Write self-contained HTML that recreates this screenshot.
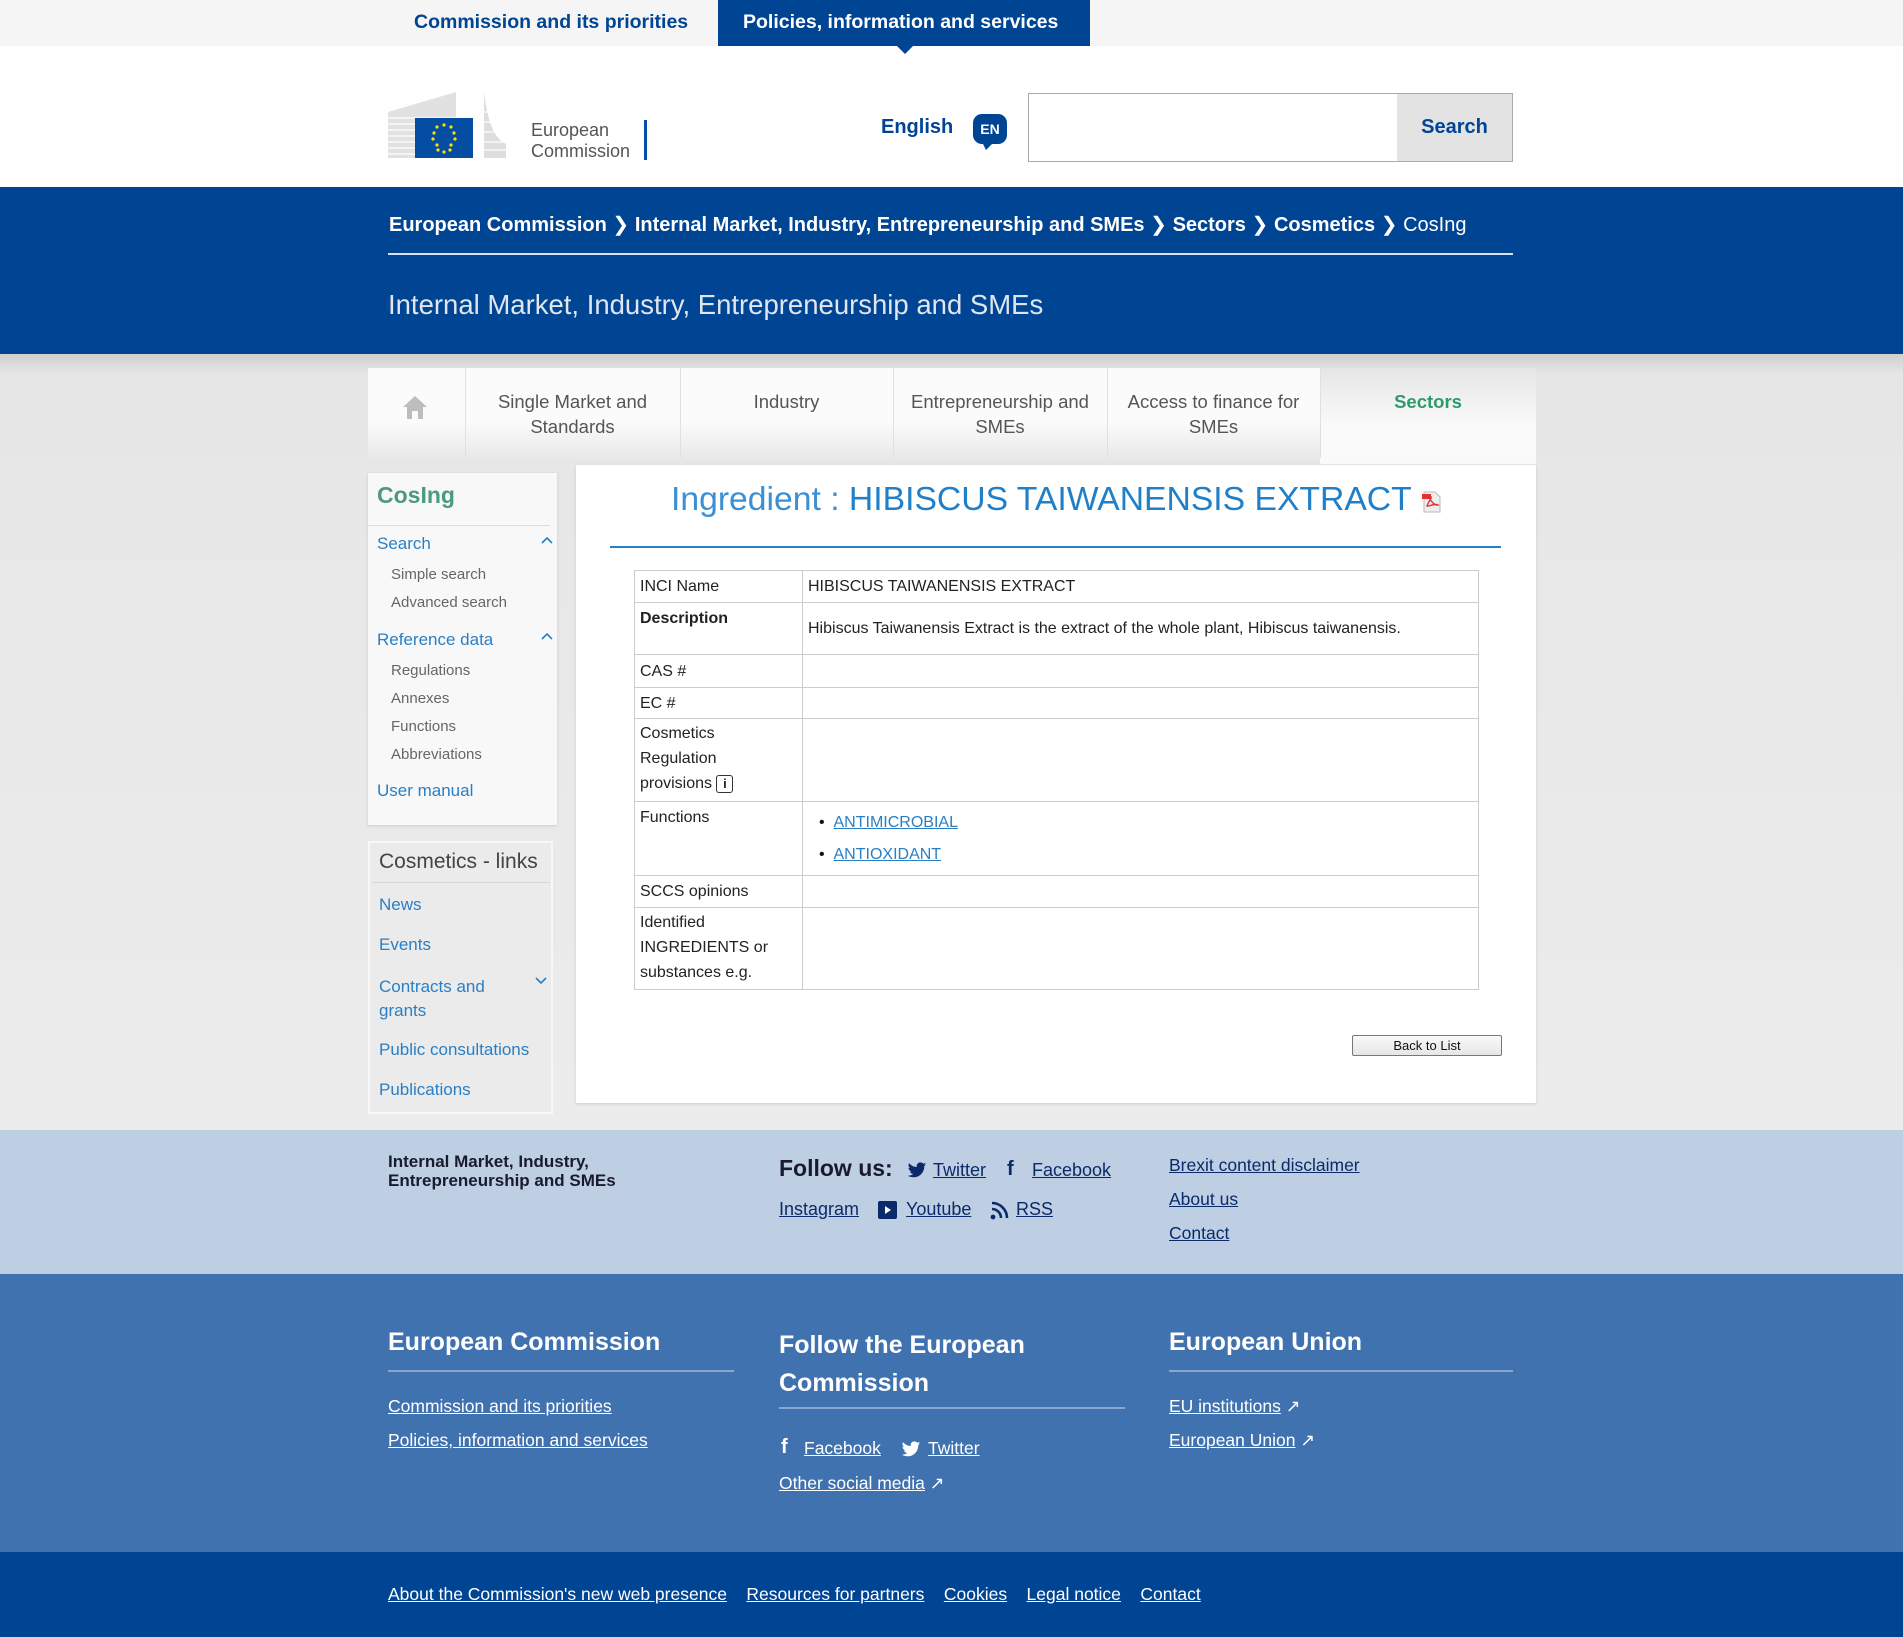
<!DOCTYPE html>
<html><head><meta charset="utf-8"><style>
*{margin:0;padding:0;box-sizing:border-box}
body{width:1903px;height:1637px;font-family:"Liberation Sans",Arial,sans-serif;background:#fff;position:relative;overflow:hidden}
.a{position:absolute;white-space:nowrap}
a{color:inherit}
.sep{display:inline-block;width:28px;text-align:center;font-weight:normal}
</style></head><body>
<!-- top bar -->
<div class="a" style="left:0;top:0;width:1903px;height:46px;background:#f5f5f5"></div>
<div class="a" style="left:414px;top:11px;font-size:19.5px;font-weight:bold;color:#004494">Commission and its priorities</div>
<div class="a" style="left:718px;top:0;width:372px;height:46px;background:#004494"></div>
<div class="a" style="left:743px;top:11px;font-size:19.5px;font-weight:bold;color:#fff">Policies, information and services</div>
<div class="a" style="left:897px;top:46px;width:0;height:0;border-left:8px solid transparent;border-right:8px solid transparent;border-top:8px solid #004494"></div>
<!-- logo -->
<svg class="a" style="left:388px;top:92px" width="120" height="68" viewBox="0 0 120 68">
<g fill="#c8c8c8"><path d="M0 20 L68 0 L68 66 L0 66Z" opacity=".55"/><path d="M96 0 C100 30 105 45 118 52 L118 66 L96 66Z" opacity=".6"/></g>
<g stroke="#fff" stroke-width="1.2">
<line x1="0" y1="26" x2="70" y2="26"/><line x1="0" y1="32" x2="70" y2="32"/><line x1="0" y1="38" x2="70" y2="38"/><line x1="0" y1="44" x2="70" y2="44"/><line x1="0" y1="50" x2="70" y2="50"/><line x1="0" y1="56" x2="70" y2="56"/><line x1="0" y1="62" x2="70" y2="62"/>
<line x1="96" y1="20" x2="120" y2="20"/><line x1="96" y1="30" x2="120" y2="30"/><line x1="96" y1="40" x2="120" y2="40"/><line x1="96" y1="50" x2="120" y2="50"/><line x1="96" y1="58" x2="120" y2="58"/></g>
<rect x="27" y="26" width="58" height="40" fill="#034ea2"/>
<g fill="#ffde00"><circle cx="56" cy="33" r="1.6"/><circle cx="63" cy="35" r="1.6"/><circle cx="66" cy="41" r="1.6"/><circle cx="63" cy="53" r="1.6"/><circle cx="67" cy="47" r="1.6"/><circle cx="56" cy="60" r="1.6"/><circle cx="49" cy="35" r="1.6"/><circle cx="46" cy="41" r="1.6"/><circle cx="45" cy="47" r="1.6"/><circle cx="49" cy="53" r="1.6"/><circle cx="62" cy="58" r="1.6"/><circle cx="50" cy="58" r="1.6"/></g>
</svg>
<div class="a" style="left:531px;top:120px;font-size:18px;color:#555;line-height:21px">European<br>Commission</div>
<div class="a" style="left:644px;top:120px;width:3px;height:40px;background:#034ea2"></div>
<div class="a" style="left:881px;top:116px;font-size:20px;font-weight:bold;color:#004494">English</div>
<div class="a" style="left:973px;top:114px;width:34px;height:30px;border-radius:9px;background:#004494;color:#fff;font-size:14px;font-weight:bold;text-align:center;line-height:30px">EN</div>
<div class="a" style="left:982px;top:142px;width:0;height:0;border-left:4px solid transparent;border-right:8px solid transparent;border-top:8px solid #004494"></div>
<div class="a" style="left:1028px;top:93px;width:485px;height:69px;border:1px solid #aaa;background:#fff"></div>
<div class="a" style="left:1397px;top:94px;width:115px;height:67px;background:#e3e3e3;color:#004494;font-size:20px;font-weight:bold;text-align:center;line-height:67px">Search</div>
<!-- blue band -->
<div class="a" style="left:0;top:187px;width:1903px;height:167px;background:#004494"></div>
<div class="a" style="left:389px;top:212px;font-size:20px;color:#fff"><b>European Commission</b><span class="sep">&#x276F;</span><b>Internal Market, Industry, Entrepreneurship and SMEs</b><span class="sep">&#x276F;</span><b>Sectors</b><span class="sep">&#x276F;</span><b>Cosmetics</b><span class="sep">&#x276F;</span>CosIng</div>
<div class="a" style="left:388px;top:253px;width:1125px;height:2px;background:#d6e0ee"></div>
<div class="a" style="left:388px;top:289px;font-size:27.5px;color:#dfe6f0">Internal Market, Industry, Entrepreneurship and SMEs</div>
<!-- gray area -->
<div class="a" style="left:0;top:354px;width:1903px;height:776px;background:linear-gradient(#cfcfcf,#e6e6e6 20px,#ececec)"></div>
<div class="a" style="left:368px;top:368px;width:1168px;height:96px;background:linear-gradient(#fbfbfb 55%,#e6e6e6)"></div>
<div class="a" style="left:1320px;top:368px;width:216px;height:96px;background:linear-gradient(#e6e6e6,#fafafa 60%)"></div>
<div class="a" style="left:465px;top:368px;width:1px;height:90px;background:#e0e0e0"></div>
<div class="a" style="left:680px;top:368px;width:1px;height:90px;background:#e0e0e0"></div>
<div class="a" style="left:893px;top:368px;width:1px;height:90px;background:#e0e0e0"></div>
<div class="a" style="left:1107px;top:368px;width:1px;height:90px;background:#e0e0e0"></div>
<div class="a" style="left:1320px;top:368px;width:1px;height:90px;background:#e0e0e0"></div>
<svg class="a" style="left:401px;top:394px" width="28" height="26" viewBox="0 0 28 26"><path d="M14 2 L2 13 H6 V25 H11 V17 H17 V25 H22 V13 H26Z" fill="#bdbdbd"/></svg>
<div class="a" style="left:465px;top:389px;width:215px;text-align:center;font-size:18.5px;color:#555;line-height:25px;white-space:normal">Single Market and Standards</div>
<div class="a" style="left:680px;top:389px;width:213px;text-align:center;font-size:18.5px;color:#555;line-height:25px">Industry</div>
<div class="a" style="left:893px;top:389px;width:214px;text-align:center;font-size:18.5px;color:#555;line-height:25px;white-space:normal">Entrepreneurship and SMEs</div>
<div class="a" style="left:1107px;top:389px;width:213px;text-align:center;font-size:18.5px;color:#555;line-height:25px;white-space:normal">Access to finance for SMEs</div>
<div class="a" style="left:1320px;top:389px;width:216px;text-align:center;font-size:18.5px;color:#2e9a6c;font-weight:bold;line-height:25px">Sectors</div>
<!-- sidebar 1 -->
<div class="a" style="left:368px;top:473px;width:189px;height:352px;background:#f8f8f8;box-shadow:0 1px 3px #ccc"></div>
<div class="a" style="left:377px;top:482px;font-size:23px;font-weight:bold;color:#4c9a7e">CosIng</div>
<div class="a" style="left:368px;top:525px;width:182px;height:1px;background:#ddd"></div>
<div class="a" style="left:377px;top:534px;font-size:17px;color:#2a7fc4">Search</div>
<svg class="a" style="left:541px;top:536px" width="12" height="8" viewBox="0 0 12 8"><path d="M1 7 L6 2 L11 7" fill="none" stroke="#2a7fc4" stroke-width="1.6"/></svg>
<div class="a" style="left:391px;top:566px;font-size:15px;color:#666">Simple search</div>
<div class="a" style="left:391px;top:594px;font-size:15px;color:#666">Advanced search</div>
<div class="a" style="left:377px;top:630px;font-size:17px;color:#2a7fc4">Reference data</div>
<svg class="a" style="left:541px;top:632px" width="12" height="8" viewBox="0 0 12 8"><path d="M1 7 L6 2 L11 7" fill="none" stroke="#2a7fc4" stroke-width="1.6"/></svg>
<div class="a" style="left:391px;top:662px;font-size:15px;color:#666">Regulations</div>
<div class="a" style="left:391px;top:690px;font-size:15px;color:#666">Annexes</div>
<div class="a" style="left:391px;top:718px;font-size:15px;color:#666">Functions</div>
<div class="a" style="left:391px;top:746px;font-size:15px;color:#666">Abbreviations</div>
<div class="a" style="left:377px;top:781px;font-size:17px;color:#2a7fc4">User manual</div>
<!-- sidebar 2 -->
<div class="a" style="left:368px;top:841px;width:185px;height:273px;background:#ebebeb;border:2px solid #f8f8f8"></div>
<div class="a" style="left:379px;top:850px;font-size:21px;color:#444">Cosmetics - links</div>
<div class="a" style="left:372px;top:882px;width:178px;height:1px;background:#d6d6d6"></div>
<div class="a" style="left:379px;top:895px;font-size:17px;color:#2a7fc4">News</div>
<div class="a" style="left:379px;top:935px;font-size:17px;color:#2a7fc4">Events</div>
<div class="a" style="left:379px;top:975px;font-size:17px;color:#2a7fc4;line-height:24px">Contracts and<br>grants</div>
<svg class="a" style="left:535px;top:977px" width="12" height="8" viewBox="0 0 12 8"><path d="M1 1 L6 6 L11 1" fill="none" stroke="#2a7fc4" stroke-width="1.6"/></svg>
<div class="a" style="left:379px;top:1040px;font-size:17px;color:#2a7fc4">Public consultations</div>
<div class="a" style="left:379px;top:1080px;font-size:17px;color:#2a7fc4">Publications</div>
<!-- main -->
<div class="a" style="left:576px;top:465px;width:960px;height:638px;background:#fff;box-shadow:0 1px 3px #ccc"></div>
<div class="a" style="left:671px;top:480px;font-size:33.7px;color:#1f7fc8"><span style="color:#3b8fd4">Ingredient : </span>HIBISCUS TAIWANENSIS EXTRACT</div>
<svg class="a" style="left:1421px;top:490px" width="22" height="24" viewBox="0 0 22 24"><path d="M3 2 H14 L19 7 V22 H3Z" fill="#eee" stroke="#bbb"/><path d="M6 16 C9 8 12 8 9 6 C7 9 14 16 17 15 C12 13 8 17 6 16Z" fill="none" stroke="#d33" stroke-width="1.4"/><rect x="1" y="4" width="9" height="5" fill="#d33"/></svg>
<div class="a" style="left:610px;top:546px;width:891px;height:2px;background:#2a7fc4"></div>
<table class="a" style="left:634px;top:570px;width:845px;border-collapse:collapse;font-size:16px;color:#222;line-height:25px">
<tr style="height:32px"><td style="width:168px;border:1px solid #ccc;padding:0 5px;vertical-align:top;padding-top:3px">INCI Name</td><td style="border:1px solid #ccc;padding:3px 5px 0;vertical-align:top">HIBISCUS TAIWANENSIS EXTRACT</td></tr>
<tr style="height:52px"><td style="border:1px solid #ccc;padding:3px 5px 0;vertical-align:top"><b>Description</b></td><td style="border:1px solid #ccc;padding:0 5px;vertical-align:middle">Hibiscus Taiwanensis Extract is the extract of the whole plant, Hibiscus taiwanensis.</td></tr>
<tr style="height:33px"><td style="border:1px solid #ccc;padding:0 5px">CAS #</td><td style="border:1px solid #ccc"></td></tr>
<tr style="height:31px"><td style="border:1px solid #ccc;padding:0 5px">EC #</td><td style="border:1px solid #ccc"></td></tr>
<tr style="height:83px"><td style="border:1px solid #ccc;padding:2px 5px 0;vertical-align:top">Cosmetics<br>Regulation<br>provisions <span style="display:inline-block;width:17px;height:18px;border:1px solid #333;border-radius:3px;font-size:13px;line-height:16px;text-align:center;font-weight:bold;vertical-align:middle">i</span></td><td style="border:1px solid #ccc"></td></tr>
<tr style="height:74px"><td style="border:1px solid #ccc;padding:3px 5px 0;vertical-align:top">Functions</td><td style="border:1px solid #ccc;padding:5px 5px 0 16px;vertical-align:top;line-height:32px;color:#111">&bull;&nbsp;&nbsp;<u style="color:#2a7fc4">ANTIMICROBIAL</u><br>&bull;&nbsp;&nbsp;<u style="color:#2a7fc4">ANTIOXIDANT</u></td></tr>
<tr style="height:32px"><td style="border:1px solid #ccc;padding:0 5px">SCCS opinions</td><td style="border:1px solid #ccc"></td></tr>
<tr style="height:82px"><td style="border:1px solid #ccc;padding:2px 5px 0;vertical-align:top">Identified<br>INGREDIENTS or<br>substances e.g.</td><td style="border:1px solid #ccc"></td></tr>
</table>
<div class="a" style="left:1352px;top:1035px;width:150px;height:21px;border:1px solid #777;border-radius:2px;background:linear-gradient(#fafafa,#e6e6e6);font-size:13px;text-align:center;line-height:19px;color:#111">Back to List</div>
<!-- light footer -->
<div class="a" style="left:0;top:1130px;width:1903px;height:144px;background:#bfcfe3"></div>
<div class="a" style="left:388px;top:1152px;font-size:17px;font-weight:bold;color:#1a1a2e;line-height:19px">Internal Market, Industry,<br>Entrepreneurship and SMEs</div>
<div class="a" style="left:779px;top:1155px;font-size:23px;font-weight:bold;color:#1a1a2e">Follow us:</div>
<svg class="a" style="left:907px;top:1162px" width="20" height="17" viewBox="0 0 24 20"><path d="M23 2.5c-.8.4-1.7.6-2.6.7.9-.6 1.6-1.4 2-2.5-.9.5-1.9.9-2.9 1.1C18.6.9 17.4.3 16.1.3c-2.5 0-4.5 2-4.5 4.5 0 .4 0 .7.1 1C7.9 5.6 4.6 3.8 2.4 1.1c-.4.7-.6 1.4-.6 2.3 0 1.6.8 2.9 2 3.7-.7 0-1.4-.2-2-.6v.1c0 2.2 1.6 4 3.6 4.4-.4.1-.8.2-1.2.2-.3 0-.6 0-.8-.1.6 1.8 2.2 3.1 4.2 3.1-1.5 1.2-3.5 1.9-5.6 1.9H1c2 1.3 4.4 2 6.9 2 8.3 0 12.8-6.9 12.8-12.8v-.6c.9-.6 1.7-1.4 2.3-2.3z" fill="#0a2a6a"/></svg>
<div class="a" style="left:933px;top:1160px;font-size:18px;color:#0a2a6a"><u>Twitter</u></div>
<div class="a" style="left:1007px;top:1158px;font-size:20px;font-weight:bold;color:#0a2a6a">f</div>
<div class="a" style="left:1032px;top:1160px;font-size:18px;color:#0a2a6a"><u>Facebook</u></div>
<div class="a" style="left:779px;top:1199px;font-size:18px;color:#0a2a6a"><u>Instagram</u></div>
<div class="a" style="left:878px;top:1201px;width:19px;height:18px;background:#0a2a6a;border-radius:2px"></div>
<div class="a" style="left:885px;top:1206px;border-left:6px solid #fff;border-top:4px solid transparent;border-bottom:4px solid transparent"></div>
<div class="a" style="left:906px;top:1199px;font-size:18px;color:#0a2a6a"><u>Youtube</u></div>
<svg class="a" style="left:990px;top:1201px" width="20" height="19" viewBox="0 0 20 19"><g fill="none" stroke="#0a2a6a" stroke-width="2.6"><path d="M2 8 A9 9 0 0 1 11 17"/><path d="M2 2 A15 15 0 0 1 17 17"/></g><circle cx="3" cy="16" r="2.4" fill="#0a2a6a"/></svg>
<div class="a" style="left:1016px;top:1199px;font-size:18px;color:#0a2a6a"><u>RSS</u></div>
<div class="a" style="left:1169px;top:1155px;font-size:17.5px;color:#0a2a6a"><u>Brexit content disclaimer</u></div>
<div class="a" style="left:1169px;top:1189px;font-size:17.5px;color:#0a2a6a"><u>About us</u></div>
<div class="a" style="left:1169px;top:1223px;font-size:17.5px;color:#0a2a6a"><u>Contact</u></div>
<!-- mid footer -->
<div class="a" style="left:0;top:1274px;width:1903px;height:278px;background:#4172b0"></div>
<div class="a" style="left:388px;top:1328px;font-size:25px;font-weight:bold;color:#fff">European Commission</div>
<div class="a" style="left:388px;top:1370px;width:346px;height:2px;background:#8aa6cf"></div>
<div class="a" style="left:388px;top:1396px;font-size:17.5px;color:#fff"><u>Commission and its priorities</u></div>
<div class="a" style="left:388px;top:1430px;font-size:17.5px;color:#fff"><u>Policies, information and services</u></div>
<div class="a" style="left:779px;top:1326px;font-size:25px;font-weight:bold;color:#fff;line-height:38px">Follow the European<br>Commission</div>
<div class="a" style="left:779px;top:1407px;width:346px;height:2px;background:#8aa6cf"></div>
<div class="a" style="left:781px;top:1436px;font-size:20px;font-weight:bold;color:#fff">f</div>
<div class="a" style="left:804px;top:1438px;font-size:17.5px;color:#fff"><u>Facebook</u></div>
<svg class="a" style="left:901px;top:1441px" width="20" height="17" viewBox="0 0 24 20"><path d="M23 2.5c-.8.4-1.7.6-2.6.7.9-.6 1.6-1.4 2-2.5-.9.5-1.9.9-2.9 1.1C18.6.9 17.4.3 16.1.3c-2.5 0-4.5 2-4.5 4.5 0 .4 0 .7.1 1C7.9 5.6 4.6 3.8 2.4 1.1c-.4.7-.6 1.4-.6 2.3 0 1.6.8 2.9 2 3.7-.7 0-1.4-.2-2-.6v.1c0 2.2 1.6 4 3.6 4.4-.4.1-.8.2-1.200.2-.3 0-.6 0-.8-.1.6 1.8 2.2 3.1 4.2 3.1-1.5 1.2-3.5 1.9-5.600 1.9H1c2 1.3 4.4 2 6.9 2 8.3 0 12.8-6.9 12.8-12.8v-.6c.9-.6 1.7-1.4 2.3-2.3z" fill="#fff"/></svg>
<div class="a" style="left:928px;top:1438px;font-size:17.5px;color:#fff"><u>Twitter</u></div>
<div class="a" style="left:779px;top:1473px;font-size:17.5px;color:#fff"><u>Other social media</u> &#x2197;</div>
<div class="a" style="left:1169px;top:1328px;font-size:25px;font-weight:bold;color:#fff">European Union</div>
<div class="a" style="left:1169px;top:1370px;width:344px;height:2px;background:#8aa6cf"></div>
<div class="a" style="left:1169px;top:1396px;font-size:17.5px;color:#fff"><u>EU institutions</u> &#x2197;</div>
<div class="a" style="left:1169px;top:1430px;font-size:17.5px;color:#fff"><u>European Union</u> &#x2197;</div>
<!-- bottom -->
<div class="a" style="left:0;top:1552px;width:1903px;height:85px;background:#004494"></div>
<div class="a" style="left:388px;top:1584px;font-size:17.5px;color:#fff"><u>About the Commission's new web presence</u>&nbsp;&nbsp;&nbsp; <u>Resources for partners</u>&nbsp;&nbsp;&nbsp; <u>Cookies</u>&nbsp;&nbsp;&nbsp; <u>Legal notice</u>&nbsp;&nbsp;&nbsp; <u>Contact</u></div>
</body></html>
